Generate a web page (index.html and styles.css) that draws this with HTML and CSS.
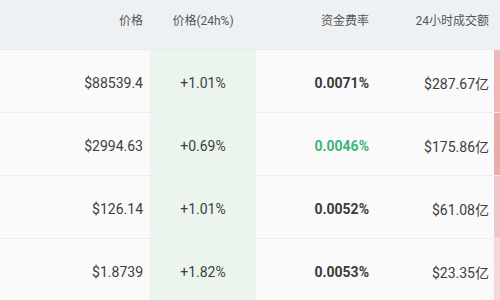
FILE: index.html
```html
<!DOCTYPE html>
<html lang="zh">
<head>
<meta charset="utf-8">
<link rel="stylesheet" href="styles.css">
</head>
<body>
<div class="table">
  <div class="row head">
    <div class="cell c-price">价格</div>
    <div class="cell c-chg">价格(24h%)</div>
    <div class="cell c-rate">资金费率</div>
    <div class="cell c-vol">24小时成交额</div>
    <div class="cell c-bar"></div>
  </div>
  <div class="row">
    <div class="cell c-price">$88539.4</div>
    <div class="cell c-chg">+1.01%</div>
    <div class="cell c-rate">0.0071%</div>
    <div class="cell c-vol">$287.67亿</div>
    <div class="cell c-bar bar1"></div>
  </div>
  <div class="row">
    <div class="cell c-price">$2994.63</div>
    <div class="cell c-chg">+0.69%</div>
    <div class="cell c-rate up">0.0046%</div>
    <div class="cell c-vol">$175.86亿</div>
    <div class="cell c-bar bar2"></div>
  </div>
  <div class="row">
    <div class="cell c-price">$126.14</div>
    <div class="cell c-chg">+1.01%</div>
    <div class="cell c-rate">0.0052%</div>
    <div class="cell c-vol">$61.08亿</div>
    <div class="cell c-bar bar3"></div>
  </div>
  <div class="row">
    <div class="cell c-price">$1.8739</div>
    <div class="cell c-chg">+1.82%</div>
    <div class="cell c-rate">0.0053%</div>
    <div class="cell c-vol">$23.35亿</div>
    <div class="cell c-bar bar4"></div>
  </div>
</div>
</body>
</html>
```
FILE: styles.css
```css
html, body {
  margin: 0;
  padding: 0;
  background: #fafafa;
}
body {
  width: 500px;
  height: 300px;
  overflow: hidden;
  font-family: Roboto, "Noto Sans CJK SC", sans-serif;
  color: #3d3d3d;
}
.table {
  display: flex;
  flex-direction: column;
}
.row {
  display: grid;
  grid-template-columns: 150px 106px 120px 118px 6px;
  height: 63px;
  border-bottom: 1px solid #ececec;
  box-sizing: border-box;
  background: #fafafa;
}
.row.head {
  height: 50px;
  background: #eef1f4;
  border-bottom: 1px solid #e8ebee;
  font-size: 12px;
  color: #555;
}
.cell {
  display: flex;
  align-items: center;
  justify-content: flex-end;
  font-size: 14px;
  padding-top: 3px;
}
.head .cell {
  font-size: 12px;
  padding-top: 0;
  padding-bottom: 11px;
}
.c-price { padding-right: 7px; }
.c-chg {
  justify-content: center;
  background: #ebf5ee;
}
.head .c-chg { background: transparent; }
.c-rate {
  padding-right: 7px;
  font-weight: 700;
  color: #3a3a3a;
}
.head .c-rate { font-weight: 400; color: #555; }
.c-rate.up { color: #3db57c; }
.c-vol { padding-right: 5px; }
.c-bar { padding: 0; }
.bar1 { background: #efb5b7; }
.bar2 { background: #eaa9ab; }
.bar3 { background: #f2c5c7; }
.bar4 { background: #f6d7d9; }
```
